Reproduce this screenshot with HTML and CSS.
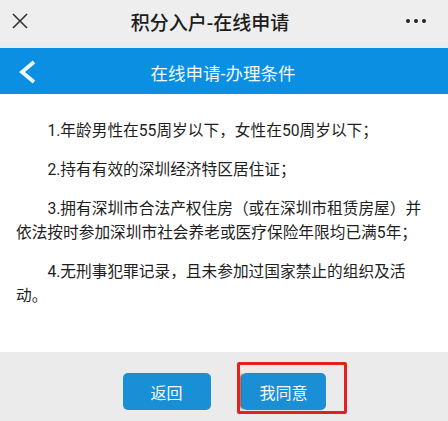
FILE: index.html
```html
<!DOCTYPE html>
<html lang="zh-CN">
<head>
<meta charset="utf-8">
<title>积分入户-在线申请</title>
<link rel="stylesheet" href="styles.css">
</head>
<body>
<div class="page">
  <header class="topbar">
    <svg class="close" width="16" height="16" viewBox="0 0 16 16"><path d="M1 1 L15 15 M15 1 L1 15" stroke="#333" stroke-width="1.6" fill="none"/></svg>
    <div class="top-title">积分入户-在线申请</div>
    <div class="dots"><span></span><span></span><span></span></div>
  </header>
  <div class="sep"></div>
  <nav class="navbar">
    <svg class="back" width="20" height="24" viewBox="0 0 20 24"><path d="M16 2 L4 12 L16 22" stroke="#eef7fd" stroke-width="3.8" fill="none" stroke-linejoin="miter"/></svg>
    <div class="nav-title">在线申请-办理条件</div>
  </nav>
  <main class="content">
    <p>1.年龄男性在55周岁以下，女性在50周岁以下；</p>
    <p>2.持有有效的深圳经济特区居住证；</p>
    <p>3.拥有深圳市合法产权住房（或在深圳市租赁房屋）并依法按时参加深圳市社会养老或医疗保险年限均已满5年；</p>
    <p>4.无刑事犯罪记录，且未参加过国家禁止的组织及活动。</p>
  </main>
  <footer class="footer">
    <button class="btn btn-back">返回</button>
    <button class="btn btn-agree">我同意</button>
  </footer>
  <div class="mark"></div>
</div>
</body>
</html>
```
FILE: styles.css
```css
* { box-sizing: border-box; }
html, body { margin: 0; padding: 0; }
body {
  font-family: Roboto, "Noto Sans CJK SC", sans-serif;
  background: #fff;
}
.page {
  position: relative;
  width: 448px;
  height: 421px;
  display: flex;
  flex-direction: column;
  overflow: hidden;
}
.topbar {
  height: 42px;
  background: #eeeeee;
  display: flex;
  align-items: center;
  padding: 0 22px 0 12px;
}
.close { flex: none; }
.top-title {
  flex: 1;
  text-align: center;
  font-size: 19px;
  font-weight: 500;
  color: #1c1c1c;
  margin-right: 14px;
}
.dots { display: flex; gap: 4px; }
.dots span {
  width: 4px; height: 4px; border-radius: 50%;
  background: #222;
}
.sep { height: 6px; background: #e7edf1; }
.navbar {
  height: 46px;
  background: #0b8fe2;
  display: flex;
  align-items: center;
  padding: 0 0 0 18px;
}
.back { flex: none; margin-top: 1px; }
.nav-title {
  flex: 1;
  text-align: center;
  color: #f2f8fd;
  font-size: 17.5px;
  margin-right: 40px;
  margin-top: 2px;
}
.content {
  flex: 1;
  padding: 25px 14px 0 16px;
  display: flex;
  flex-direction: column;
  gap: 15px;
}
.content p {
  margin: 0;
  font-size: 15.7px;
  line-height: 24px;
  text-indent: 2em;
  color: #1e1e1e;
}
.footer {
  height: 69px;
  background: #ebebeb;
  display: flex;
  justify-content: center;
  align-items: flex-start;
  padding-top: 21px;
  gap: 31px;
}
.btn {
  height: 37px;
  border: none;
  border-radius: 5px;
  background: #1a8fd6;
  color: #f4f9fd;
  font-family: Roboto, "Noto Sans CJK SC", sans-serif;
  font-size: 16px;
  padding: 0;
}
.btn-back { width: 88px; }
.btn-agree { width: 84px; box-shadow: -3px 0 2px -1px #55687a; }
.mark {
  position: absolute;
  left: 237px;
  top: 362px;
  width: 110px;
  height: 52px;
  border: 3px solid #e3221d;
  border-radius: 2px;
  pointer-events: none;
}
```
